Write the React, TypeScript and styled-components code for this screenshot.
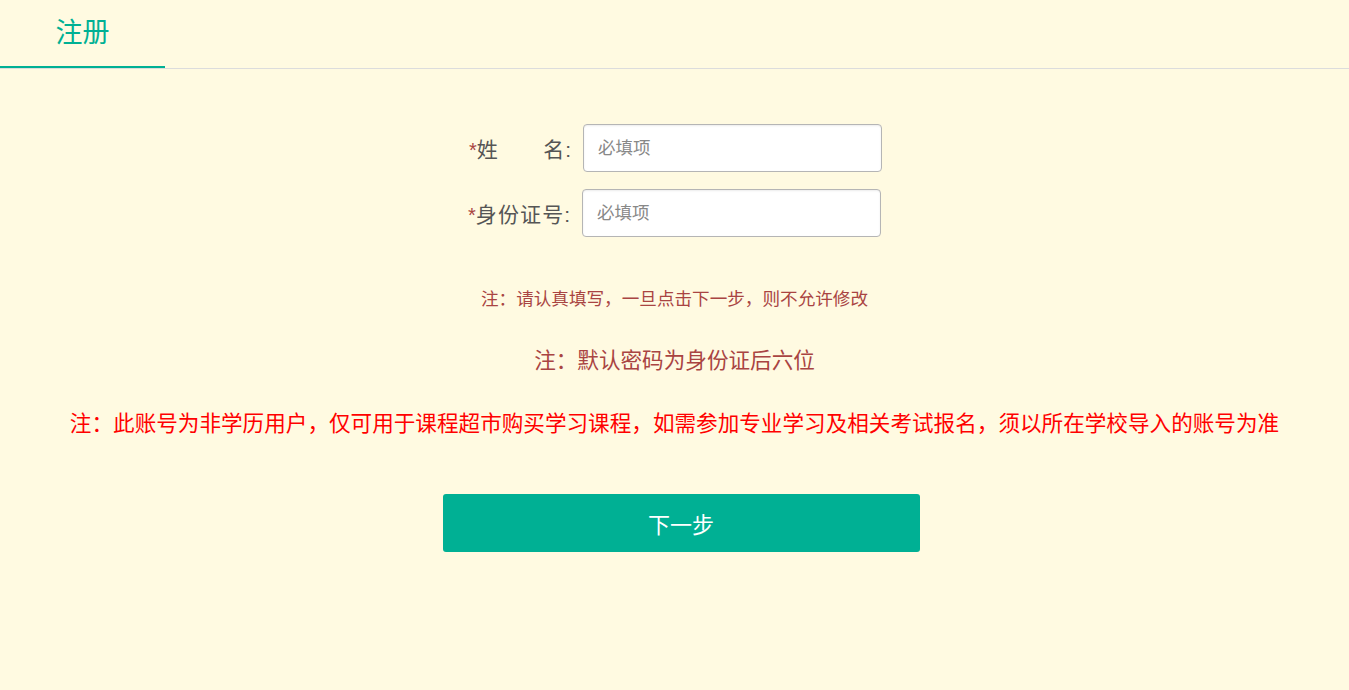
import styled, { createGlobalStyle } from 'styled-components';

const GlobalStyle = createGlobalStyle`
  html, body {
    margin: 0;
    padding: 0;
    background: #fffae1;
    font-family: "Liberation Sans", "Noto Sans CJK SC", sans-serif;
  }
`;

const Page = styled.div`
  min-height: 690px;
  background: #fffae1;
`;

const TabBar = styled.div`
  display: flex;
  height: 68px;
  border-bottom: 1px solid #dcdcdc;
`;

const Tab = styled.div`
  width: 165px;
  height: 66px;
  line-height: 66px;
  text-align: center;
  font-size: 27px;
  color: #00b094;
  border-bottom: 2px solid #00b094;
`;

const Form = styled.div`
  display: flex;
  flex-direction: column;
  align-items: center;
  padding-top: 55px;
`;

const Row = styled.div<{ $shift?: number }>`
  display: flex;
  align-items: center;
  gap: 12px;
  margin-left: ${({ $shift }) => $shift ?? 0}px;
  & + & {
    margin-top: 17px;
  }
`;

const Label = styled.label`
  display: flex;
  align-items: baseline;
  width: 102px;
  font-size: 21px;
  color: #555;
`;

const Star = styled.span`
  color: #a94442;
  font-size: 20px;
`;

const LabelText = styled.span`
  flex: 1;
  text-align: justify;
  text-align-last: justify;
`;

const Colon = styled.span`
  margin-left: 1px;
`;

const Input = styled.input`
  box-sizing: border-box;
  width: 299px;
  height: 48px;
  padding: 0 14px;
  border: 1px solid #b5b5b5;
  border-radius: 4px;
  background: #fff;
  box-shadow: inset 0 1px 2px rgba(0, 0, 0, 0.08);
  font-family: inherit;
  font-size: 17.5px;
  outline: none;
  &::placeholder {
    color: #888;
  }
`;

const Note = styled.p<{ $size: number; $color: string; $top: number }>`
  margin: ${({ $top }) => $top}px 0 0;
  font-size: ${({ $size }) => $size}px;
  line-height: 30px;
  color: ${({ $color }) => $color};
  text-align: center;
  white-space: nowrap;
`;

const NextButton = styled.button`
  width: 477px;
  height: 58px;
  margin: 55px 0 0 13px;
  border: none;
  border-radius: 3px;
  background: #00b094;
  color: #fff;
  font-family: inherit;
  font-size: 22px;
  cursor: pointer;
`;

export default function App() {
  return (
    <Page>
      <GlobalStyle />
      <TabBar>
        <Tab>注册</Tab>
      </TabBar>
      <Form>
        <Row $shift={2}>
          <Label>
            <Star>*</Star>
            <LabelText>姓 名</LabelText>
            <Colon>:</Colon>
          </Label>
          <Input placeholder="必填项" />
        </Row>
        <Row>
          <Label>
            <Star>*</Star>
            <LabelText>身份证号</LabelText>
            <Colon>:</Colon>
          </Label>
          <Input placeholder="必填项" />
        </Row>
        <Note $size={17.6} $color="#a94442" $top={47}>
          注：请认真填写，一旦点击下一步，则不允许修改
        </Note>
        <Note $size={21.6} $color="#a94442" $top={32}>
          注：默认密码为身份证后六位
        </Note>
        <Note $size={21.6} $color="#ff0000" $top={33}>
          注：此账号为非学历用户，仅可用于课程超市购买学习课程，如需参加专业学习及相关考试报名，须以所在学校导入的账号为准
        </Note>
        <NextButton>下一步</NextButton>
      </Form>
    </Page>
  );
}
